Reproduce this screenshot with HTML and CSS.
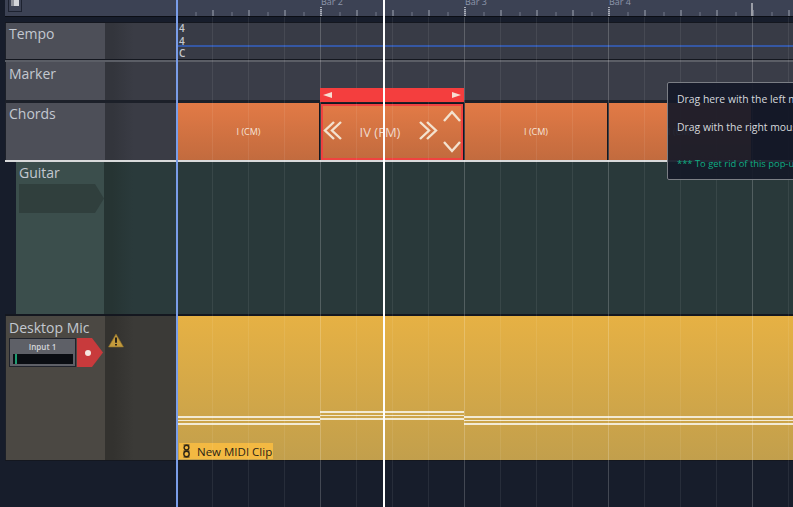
FILE: index.html
```html
<!DOCTYPE html>
<html lang="en">
<head>
<meta charset="utf-8">
<title>Arrangement</title>
<link rel="stylesheet" href="styles.css">
</head>
<body>
<div class="daw">
  <div class="ruler">
    <div class="ruler-head"><span class="corner"><span class="corner-fill"></span></span></div>
    <div class="ruler-lane">
      <span class="bar-label dotted">Bar 2</span>
      <span class="bar-label dotted">Bar 3</span>
      <span class="bar-label dotted">Bar 4</span>
      <span class="bar-label solid"></span>
    </div>
  </div>

  <div class="track tempo">
    <div class="head"><span class="name">Tempo</span></div>
    <div class="lane">
      <div class="sig"><span>4</span><span>4</span><span>C</span></div>
      <div class="tempo-line"></div>
    </div>
  </div>
  <div class="rule"></div>

  <div class="track marker">
    <div class="head"><span class="name">Marker</span></div>
    <div class="lane"></div>
  </div>

  <div class="track chords">
    <div class="head"><span class="name">Chords</span></div>
    <div class="lane chord-lane">
      <div class="chord c1">I (CM)</div>
      <div class="chord c2">
        <svg class="chev" width="144" height="56" viewBox="0 0 144 56" fill="none" stroke="#f3e2cf" stroke-width="2.4">
          <path d="M12 18 3 26.5l9 8.5M19 18l-9 8.5 9 8.5"/>
          <path d="M98 18l9 8.5-9 8.5M105 18l9 8.5-9 8.5"/>
          <path d="M122 17l8-9 8 9M122 38l8 9 8-9"/>
        </svg>
        <span class="chord-big">IV (FM)</span>
      </div>
      <div class="chord c3">I (CM)</div>
      <div class="chord c4">I (CM)</div>
    </div>
  </div>
  <div class="white-rule"></div>

  <div class="track guitar">
    <div class="head"><span class="name">Guitar</span><div class="slot"></div></div>
    <div class="lane"></div>
  </div>

  <div class="track mic">
    <div class="head">
      <span class="name">Desktop Mic</span>
      <div class="input-row">
        <div class="input">
          <span class="input-label">Input 1</span>
          <span class="meter"><span class="meter-fill"></span></span>
        </div>
        <div class="arm"><span class="dot"></span></div>
        <svg class="warn" width="16" height="15" viewBox="0 0 16 15"><path d="M8 1 15.5 14H.5Z" fill="#c39a3c" stroke="#8c6e2c" stroke-width=".6"/><path d="M8 4.5v5.2M8 11v1.6" stroke="#26211a" stroke-width="2"/></svg>
      </div>
    </div>
    <div class="lane clip-lane">
      <div class="notes">
        <div class="note-group low"><i></i><i></i><i></i></div>
        <div class="note-group high"><i></i><i></i><i></i></div>
        <div class="note-group low rest"><i></i><i></i><i></i></div>
      </div>
      <div class="clip-label">
        <svg width="7" height="14" viewBox="0 0 7 14" fill="none" stroke="#2c2414" stroke-width="1.4"><circle cx="3.5" cy="3.6" r="2.4"/><circle cx="3.5" cy="10" r="2.7"/><path d="M.5 1h6M.5 7h6M.5 13h6" stroke-width="1"/></svg>
        <span>New MIDI Clip</span>
      </div>
    </div>
  </div>

  <div class="footer"></div>

  <div class="grid"></div>
  <div class="resize-bar"><span class="tri left"></span><span class="tri right"></span></div>
  <div class="playhead start"></div>
  <div class="playhead now"></div>

  <div class="popup">
    <p>Drag here with the left mouse button to move this clip</p>
    <p>Drag with the right mouse button to see more options</p>
    <p class="hint">*** To get rid of this pop-up help, turn it off in settings</p>
  </div>
</div>
</body>
</html>
```
FILE: styles.css
```css
* { box-sizing: border-box; }
html, body { margin: 0; padding: 0; }
body { width: 793px; height: 507px; overflow: hidden; background: #171d2b; font-family: "Open Sans", "Noto Sans", sans-serif; }
.daw { position: relative; width: 793px; height: 507px; overflow: hidden; display: flex; flex-direction: column; background: #171d2b; padding-left: 5px; }

.ruler { flex: none; height: 17px; display: flex; border-bottom: 1px solid #0b0e15; background: #3c4254; margin-bottom: 5px; }
.ruler-head { width: 173px; flex: none; padding-left: 3px; }
.corner { display: block; width: 14px; height: 12px; border: 1px solid #1d2230; border-top: 0; padding-left: 2px; }
.corner-fill { display: block; width: 8px; height: 6px; background: linear-gradient(90deg, #8e919a 0 3px, #d3d5da 3px); }
.ruler-lane {
  flex: 1; display: flex; padding-left: 142px;
  background:
    repeating-linear-gradient(90deg, transparent 0 17px, #575d6f 17px 19px, transparent 19px 36px) 0 100% / 100% 4px no-repeat,
    repeating-linear-gradient(90deg, transparent 0 34px, #6e7484 34px 36px) 0 100% / 100% 6px no-repeat;
}
.bar-label { position: relative; width: 144px; flex: none; height: 19px; font-size: 9px; line-height: 9px; color: #8d96ab; margin-top: -3px; padding-left: 1px; }
.bar-label::before { content: ""; position: absolute; left: 0; bottom: 0; width: 2px; height: 9px; }
.bar-label.dotted::before { background: repeating-linear-gradient(#a9adb8 0 1px, transparent 1px 2px); }
.bar-label.solid::before { height: 13px; background: #9a9da6; left: -1px; }

.track { flex: none; display: flex; border-top: 1px solid #14171f; }
.head { flex: none; width: 173px; position: relative; padding-left: 3px; border-left: 1px solid #1c2029; background: linear-gradient(90deg, var(--hd) 0 99px, var(--hd2) 99px 107px, var(--hd3) 128px); }
.name { display: block; font-size: 14px; line-height: 20px; color: #c3c8d0; padding-top: 1px; height: 21px; }
.lane { flex: 1; position: relative; background: var(--ln); }

.tempo { height: 37px; --hd: #4d4f58; --hd2: #33353c; --hd3: #3a3c45; --ln: #383b46; }
.rule { flex: none; height: 3px; background: #5b5e66; border-top: 1px solid #14171f; }
.marker { height: 38px; border-top: 0; --hd: #4d4f58; --hd2: #33353c; --hd3: #3a3c45; --ln: #3a3d48; }
.marker .name { padding-top: 2px; height: 22px; }
.chords { height: 60px; border-top: 3px solid #1c2029; --hd: #4d4f58; --hd2: #33353c; --hd3: #3a3c45; --ln: #14171f; }
.white-rule { flex: none; height: 2px; background: #d9dadb; }
.guitar { height: 154px; border-top: 0; border-bottom: 2px solid #14171f; padding-left: 11px; --hd: #3b4e4c; --hd2: #263433; --hd3: #2a3a3b; --ln: #29393a; }
.guitar .head { width: 162px; padding-left: 3px; border-left: 0; background: linear-gradient(90deg, var(--hd) 0 88px, var(--hd2) 88px 96px, var(--hd3) 117px); }
.mic { height: 145px; border-top: 0; border-bottom: 1px solid #14171f; --hd: #4b4843; --hd2: #33322f; --hd3: #3b3a37; }
.mic .name { padding-top: 2px; height: 22px; }
.footer { flex: 1; }

.sig { position: absolute; left: 1px; top: -2px; display: flex; flex-direction: column; font-size: 10px; line-height: 12.5px; font-weight: 600; color: #c4c8cf; padding-top: 1px; }
.tempo-line { position: absolute; left: 0; right: 0; top: 22px; height: 2px; background: #3557a4; }

.chord-lane { display: flex; gap: 2px; }
.chord { flex: none; height: 100%; position: relative; display: flex; align-items: center; justify-content: center; font-size: 9px; color: #f6e4d8; background: linear-gradient(#e27a46, #c26b3e); }
.c1 { width: 141px; }
.c2 { width: 142px; height: calc(100% - 1px); margin-top: 1px; border: 2px solid #ef4240; }
.c3 { width: 142px; }
.c4 { width: 142px; }
.chord-big { font-size: 13px; color: #efd9cb; position: relative; left: -12px; }
.chev { position: absolute; left: 0; top: 0; margin: -2px 0 0 -1px; }

.slot { width: 85px; height: 29px; margin-top: 1px; background: #303f3d; clip-path: polygon(0 0, 76px 0, 100% 50%, 76px 100%, 0 100%); }

.input-row { display: flex; align-items: flex-start; }
.input { width: 67px; height: 29px; border: 1px solid #20232c; background: #5e6067; display: flex; flex-direction: column; align-items: center; }
.input-label { font-size: 8px; line-height: 15px; color: #d6d7da; font-weight: 600; }
.meter { display: block; width: 60px; height: 10px; background: #0a0d12; padding-left: 2px; }
.meter-fill { display: block; width: 2px; height: 100%; background: #1f9c72; }
.arm { width: 26px; height: 29px; margin-left: 1px; background: #c83a3c; clip-path: polygon(0 0, 15px 0, 100% 50%, 15px 100%, 0 100%); display: flex; align-items: center; padding-left: 8px; }
.dot { width: 6px; height: 6px; border-radius: 50%; background: #f5e6e0; }
.warn { margin: -5px 0 0 5px; }

.clip-lane { background: linear-gradient(#e6b144, #c29f4c); display: flex; flex-direction: column; justify-content: flex-end; }
.notes { display: flex; height: 14px; margin-bottom: 18px; align-items: flex-start; }
.note-group { width: 142px; display: flex; flex-direction: column; flex: none; }
.note-group.high { width: 144px; }
.note-group.rest { width: 400px; }
.note-group.low { margin-top: 5px; }
.note-group i { display: block; height: 2px; background: #f2ead4; margin-bottom: 2px; }
.note-group i:nth-child(2) { height: 1px; }
.clip-label { flex: none; align-self: flex-start; margin: 0 0 1px 1px; height: 16px; width: 94px; background: #f3b942; display: flex; align-items: center; gap: 7px; padding-left: 4px; font-size: 11.5px; color: #2a2416; }

.grid {
  position: absolute; left: 176px; top: 17px; bottom: 0; right: 0; pointer-events: none;
  background:
    linear-gradient(90deg, rgba(255,255,255,.13) 0 1px, transparent 1px) 0 0 / 144px 100%,
    linear-gradient(90deg, rgba(255,255,255,.07) 0 1px, transparent 1px) 0 0 / 36px 100%;
}
.playhead { position: absolute; top: 0; bottom: 0; width: 2px; }
.playhead.start { left: 176px; background: #7a9de8; }
.playhead.now { left: 383px; background: #fff; }

.resize-bar { position: absolute; left: 320px; top: 88px; width: 144px; height: 14px; background: #f43e3e; display: flex; justify-content: space-between; align-items: center; padding: 0 3px; }
.tri { width: 0; height: 0; border-top: 3.5px solid transparent; border-bottom: 3.5px solid transparent; }
.tri.left { border-right: 9px solid #f7ded2; }
.tri.right { border-left: 9px solid #f7ded2; }

.popup { position: absolute; left: 667px; top: 82px; width: 340px; height: 98px; background: rgba(20,25,40,.93); border: 1px solid #7b7e85; border-radius: 2px; padding: 9px 9px 0; font-size: 10.4px; color: #d6d8dc; white-space: nowrap; }
.popup p { margin: 0 0 13px; line-height: 15px; }
.popup .hint { margin-top: 21px; color: #10ad83; font-size: 9.4px; }
```
